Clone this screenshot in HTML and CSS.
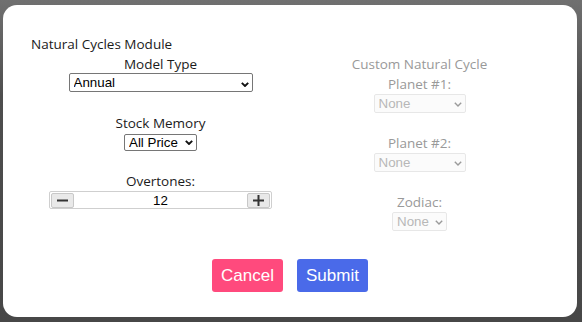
FILE: index.html
```html
<!DOCTYPE html>
<html lang="en">
<head>
<meta charset="utf-8">
<title>Natural Cycles Module</title>
<link rel="stylesheet" href="styles.css">
</head>
<body>
<div class="modal">
  <div class="columns">
    <div class="col">
      <div class="module-title">Natural Cycles Module</div>
      <div class="field">
        <label class="label" for="model">Model Type</label>
        <div class="control">
          <span class="select-wrap">
            <select id="model" class="select w-model"><option>Annual</option></select>
            <svg class="chev" width="8" height="5" viewBox="0 0 8 5"><polyline points="0.8,0.8 4,4 7.2,0.8" fill="none" stroke="#111" stroke-width="1.9"/></svg>
          </span>
        </div>
      </div>
      <div class="field">
        <label class="label" for="memory">Stock Memory</label>
        <div class="control">
          <span class="select-wrap">
            <select id="memory" class="select w-memory"><option>All Price</option></select>
            <svg class="chev" width="8" height="5" viewBox="0 0 8 5"><polyline points="0.8,0.8 4,4 7.2,0.8" fill="none" stroke="#111" stroke-width="1.9"/></svg>
          </span>
        </div>
      </div>
      <div class="field last">
        <label class="label" for="overtones">Overtones:</label>
        <div class="stepper">
          <button class="step-btn" type="button" aria-label="decrease">
            <svg width="11" height="11" viewBox="0 0 11 11"><rect x="0" y="4.5" width="11" height="2" fill="#333"/></svg>
          </button>
          <input id="overtones" class="step-value" type="text" value="12">
          <button class="step-btn" type="button" aria-label="increase">
            <svg width="11" height="11" viewBox="0 0 11 11"><rect x="0" y="4.5" width="11" height="2" fill="#333"/><rect x="4.5" y="0" width="2" height="11" fill="#333"/></svg>
          </button>
        </div>
      </div>
    </div>
    <div class="col col-right disabled">
      <div class="col-title">Custom Natural Cycle</div>
      <div class="field">
        <label class="label" for="p1">Planet #1:</label>
        <div class="control">
          <span class="select-wrap">
            <select id="p1" class="select w-planet" disabled><option>None</option></select>
            <svg class="chev" width="8" height="5" viewBox="0 0 8 5"><polyline points="0.8,0.8 4,4 7.2,0.8" fill="none" stroke="#9a9a9a" stroke-width="1.4"/></svg>
          </span>
        </div>
      </div>
      <div class="field">
        <label class="label" for="p2">Planet #2:</label>
        <div class="control">
          <span class="select-wrap">
            <select id="p2" class="select w-planet" disabled><option>None</option></select>
            <svg class="chev" width="8" height="5" viewBox="0 0 8 5"><polyline points="0.8,0.8 4,4 7.2,0.8" fill="none" stroke="#9a9a9a" stroke-width="1.4"/></svg>
          </span>
        </div>
      </div>
      <div class="field last">
        <label class="label" for="zod">Zodiac:</label>
        <div class="control">
          <span class="select-wrap">
            <select id="zod" class="select w-zodiac" disabled><option>None</option></select>
            <svg class="chev" width="8" height="5" viewBox="0 0 8 5"><polyline points="0.8,0.8 4,4 7.2,0.8" fill="none" stroke="#9a9a9a" stroke-width="1.4"/></svg>
          </span>
        </div>
      </div>
    </div>
  </div>
  <div class="actions">
    <button class="btn btn-cancel" type="button">Cancel</button>
    <button class="btn btn-submit" type="button">Submit</button>
  </div>
</div>
</body>
</html>
```
FILE: styles.css
```css
html, body {
  margin: 0;
  padding: 0;
}
body {
  width: 582px;
  height: 322px;
  box-sizing: border-box;
  padding: 5px 5px 5px 3px;
  background: linear-gradient(#707070, #4e4e4e 30%, #474747);
  font-family: "Open Sans", "Noto Sans", sans-serif;
  font-size: 13.5px;
  color: #1b1b1b;
  overflow: hidden;
}
.modal {
  width: 574px;
  height: 312px;
  box-sizing: border-box;
  background: #fff;
  border-radius: 14px;
  padding: 29px 28px 25px 28px;
}
.columns {
  display: grid;
  grid-template-columns: 1fr 1fr;
}
.module-title {
  line-height: 20px;
  text-align: left;
}
.col-title {
  line-height: 20px;
  text-align: center;
}
.col-right {
  padding-top: 20px;
}
.field {
  text-align: center;
  margin-bottom: 20px;
}
.field.last {
  margin-bottom: 0;
}
.label {
  display: block;
  line-height: 20px;
}
.control {
  display: flex;
  justify-content: center;
}
.select-wrap {
  position: relative;
  display: block;
}
.select {
  -webkit-appearance: none;
  appearance: none;
  display: block;
  box-sizing: border-box;
  height: 19px;
  margin: 0;
  padding: 0 0 0 4px;
  border: 1px solid #767676;
  border-radius: 2px;
  background: #fff;
  color: #000;
  font-family: "Liberation Sans", Arial, sans-serif;
  font-size: 13.33px;
  line-height: 17px;
}
.w-model { width: 184px; margin-top: -1px; margin-bottom: 1px; }
.w-memory { width: 73px; margin-top: 1px; height: 17px; line-height: 15px; }
.w-planet { width: 92px; }
.w-zodiac { width: 55px; }
.chev {
  position: absolute;
  right: 4px;
  top: 50%;
  margin-top: -2px;
  pointer-events: none;
}
.disabled {
  color: #999;
}
.disabled .select {
  border-color: #dedede;
  background: #fafafa;
  color: #999;
}
.stepper {
  display: flex;
  align-items: center;
  box-sizing: border-box;
  width: 223px;
  height: 18px;
  margin: 0 auto;
  padding: 0 1px;
  border: 1px solid #cfcfcf;
  border-radius: 2px;
}
.step-btn {
  display: flex;
  align-items: center;
  justify-content: center;
  box-sizing: border-box;
  width: 23px;
  height: 15px;
  padding: 0;
  margin: 0;
  border: 1px solid #c8c8c8;
  border-radius: 2px;
  background: #e9e9e9;
}
.step-value {
  flex: 1;
  min-width: 0;
  height: 14px;
  margin: 0;
  padding: 0;
  border: none;
  outline: none;
  text-align: center;
  font-family: "Liberation Sans", Arial, sans-serif;
  font-size: 13.33px;
  color: #000;
  background: transparent;
}
.actions {
  display: flex;
  justify-content: center;
  gap: 14px;
  margin-top: 28px;
}
.btn {
  box-sizing: border-box;
  height: 33px;
  width: 71px;
  padding: 0;
  border: none;
  border-radius: 3px;
  color: #fff;
  font-family: "Liberation Sans", Arial, sans-serif;
  font-size: 17px;
}
.btn-cancel { background: #ff4a7d; }
.btn-submit { background: #4a6ae9; }
```
